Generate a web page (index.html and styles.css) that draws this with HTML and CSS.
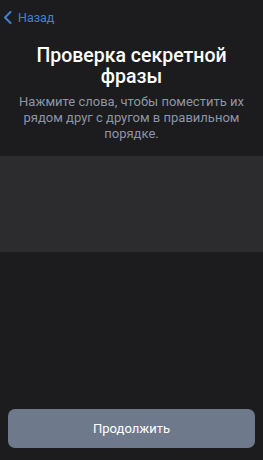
FILE: index.html
```html
<!DOCTYPE html>
<html lang="ru">
<head>
<meta charset="utf-8">
<link rel="stylesheet" href="styles.css">
</head>
<body>
<div class="screen">
  <div class="nav">
    <svg class="chev" width="9" height="13" viewBox="0 0 9 13"><path d="M7.5 1 L2 6.5 L7.5 12" fill="none" stroke="#4380d4" stroke-width="2" stroke-linecap="round" stroke-linejoin="round"/></svg>
    <span class="back">Назад</span>
  </div>
  <h1 class="title">Проверка секретной фразы</h1>
  <p class="sub">Нажмите слова, чтобы поместить их рядом друг с другом в правильном порядке.</p>
  <div class="panel"></div>
  <div class="spacer"></div>
  <div class="btn">Продолжить</div>
</div>
</body>
</html>
```
FILE: styles.css
```css
html, body {
  margin: 0;
  padding: 0;
  background: #1c1c1e;
}
.screen {
  height: 460px;
  display: flex;
  flex-direction: column;
  font-family: Roboto, "Liberation Sans", sans-serif;
}
.nav {
  display: flex;
  align-items: center;
  gap: 6px;
  height: 20px;
  padding: 7px 0 0 3px;
}
.chev { display: block; }
.back {
  color: #4380d4;
  font-size: 12.5px;
}
.title {
  margin: 18px 20px 0;
  text-align: center;
  color: #ffffff;
  font-size: 19.5px;
  font-weight: 500;
  line-height: 21px;
}
.sub {
  margin: 7px 8px 0;
  text-align: center;
  color: #8d95a5;
  font-size: 13px;
  line-height: 16px;
}
.panel {
  margin-top: 14px;
  height: 96px;
  background: #2c2c2e;
}
.spacer { flex: 1; }
.btn {
  margin: 0 8px 12px;
  height: 39px;
  border-radius: 7px;
  background: #6e7a8c;
  color: #ffffff;
  font-size: 13px;
  display: flex;
  align-items: center;
  justify-content: center;
}
```
